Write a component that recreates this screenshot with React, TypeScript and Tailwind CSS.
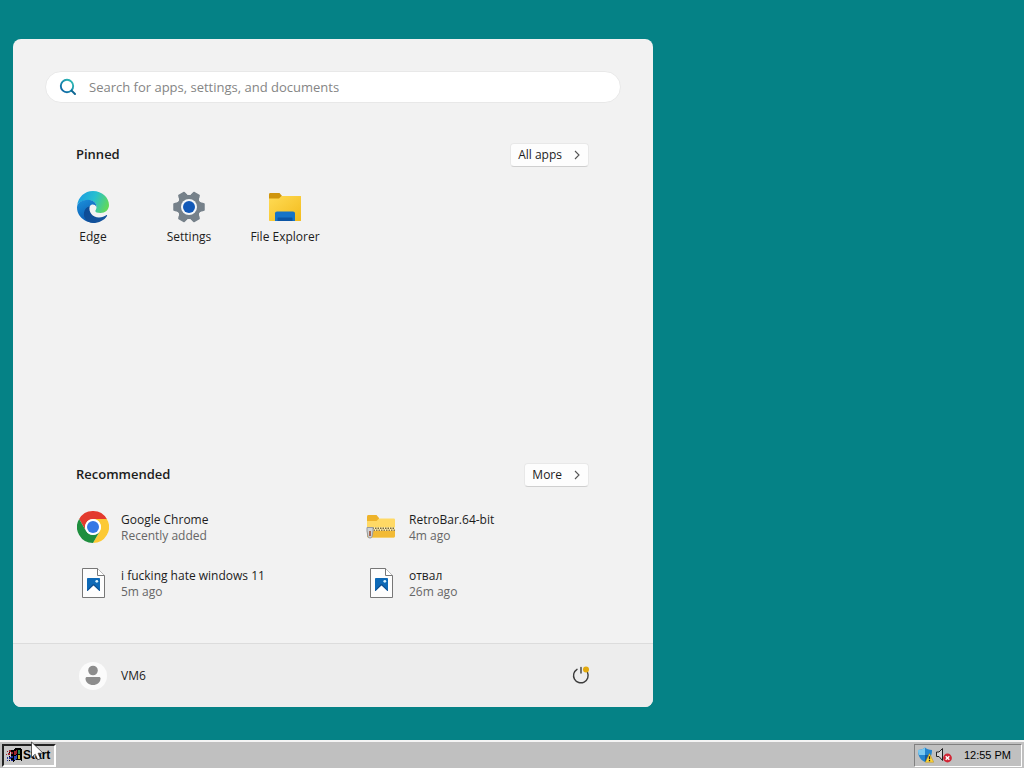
import type { ReactNode } from 'react';

interface PinnedApp {
  name: string;
  icon: ReactNode;
}

interface RecentItem {
  name: string;
  detail: string;
  icon: ReactNode;
}

const EdgeIcon = () => (
  <svg className="size-8" viewBox="0 0 32 32" aria-hidden="true">
    <defs>
      <linearGradient id="edge-top" x1="0" y1="0.3" x2="1" y2="0.6">
        <stop offset="0" stopColor="#1b9de2" />
        <stop offset="0.5" stopColor="#27bfd0" />
        <stop offset="1" stopColor="#62d957" />
      </linearGradient>
      <linearGradient id="edge-left" x1="0" y1="0" x2="0.5" y2="1">
        <stop offset="0" stopColor="#1c92dc" />
        <stop offset="1" stopColor="#0b58b0" />
      </linearGradient>
      <linearGradient id="edge-low" x1="0" y1="0" x2="1" y2="0.6">
        <stop offset="0" stopColor="#0c4a94" />
        <stop offset="1" stopColor="#15549d" />
      </linearGradient>
    </defs>
    <path
      fill="url(#edge-top)"
      d="M0.2 14.2C1.2 6.200 7.600 0 16 0c9 0 16 6.600 16 14 0 5-4 8-8.500 8-3.500 0-5.200-1-5.200-2 0-.8 1.200-1.500 1.200-4 0-4-3.600-7-8.300-7C6 9 1.600 11.500.2 14.200Z"
    />
    <path
      fill="url(#edge-left)"
      d="M0 16.500C0 11.800 5 8.800 11 8.800c4.800 0 8.500 3 8.500 7.200-1.500-3-5-3.300-6.800-.8-3.700 5 .3 13 8.300 13.800C18.500 31.500 12 32 8 29.500 3 26.500 0 22 0 16.500Z"
    />
    <path
      fill="url(#edge-low)"
      d="M12.700 15.200c-1.400 5.800 2.800 11.200 9.300 11.200 3 0 5.500-1 7.200-2.200.6-.4 1.200.1.800.8C27.400 29.300 22 32 16 32 9.500 32 6.200 26.500 7 21.500c.5-3.300 3-5.800 5.700-6.300Z"
    />
  </svg>
);

const SettingsIcon = () => (
  <svg className="size-8" viewBox="0 0 32 32" aria-hidden="true">
    <g fill="#76818a" stroke="#76818a" strokeWidth="1.500" strokeLinejoin="round">
      <circle cx="16" cy="16" r="11.500" />
      {[0, 60, 120, 180, 240, 300].map((angle) => (
        <path
          key={angle}
          d="M25 11l6 2v6l-6 2Z"
          transform={`rotate(${angle} 16 16)`}
        />
      ))}
    </g>
    <g fill="#f2f2f2">
      {[30, 90, 150, 210, 270, 330].map((angle) => (
        <circle
          key={angle}
          cx="30.500"
          cy="16"
          r="2.500"
          transform={`rotate(${angle} 16 16)`}
        />
      ))}
    </g>
    <circle cx="16" cy="16" r="8" fill="#f4f7fa" />
    <circle cx="16" cy="16" r="6" fill="#1259b8" />
  </svg>
);

const FolderIcon = () => (
  <svg className="size-8" viewBox="0 0 32 32" aria-hidden="true">
    <defs>
      <linearGradient id="folder-front" x1="0" y1="0" x2="1" y2="1">
        <stop offset="0" stopColor="#ffdb55" />
        <stop offset="1" stopColor="#f3bb1c" />
      </linearGradient>
    </defs>
    <path fill="#cf950d" d="M0 3.500c0-.8.500-1.500 1.300-1.500h9.200L13 5v4H0Z" />
    <path
      fill="url(#folder-front)"
      d="M0 7.500h10L12.500 5h18.800c.7 0 1 .4 1 1v23c0 .7-.5 1-1 1H1c-.6 0-1-.4-1-1Z"
    />
    <path fill="#1674c8" d="M6 30v-7.500c0-1.200.8-2 2-2h16c1.200 0 2 .8 2 2V30Z" />
    <path fill="#0c55a4" d="M8.500 30v-2.500c0-.6.400-1 1-1h13c.6 0 1 .4 1 1V30Z" />
  </svg>
);

const ChromeIcon = () => (
  <svg className="size-8" viewBox="0 0 32 32" aria-hidden="true">
    <circle cx="16" cy="16" r="16" fill="#fff" />
    <path fill="#e33b2e" d="M2.140 8A16 16 0 0 1 29.860 8H16a8 8 0 0 0-6.930 12Z" />
    <path fill="#fcc934" d="M29.860 8A16 16 0 0 1 16 32l6.930-12A8 8 0 0 0 16 8Z" />
    <path fill="#1e8e3e" d="M16 32A16 16 0 0 1 2.140 8l6.930 12a8 8 0 0 0 13.860 0Z" />
    <circle cx="16" cy="16" r="7.800" fill="#fff" />
    <circle cx="16" cy="16" r="6" fill="#3578e5" />
  </svg>
);

const ZipFolderIcon = () => (
  <svg className="size-8" viewBox="0 0 32 32" aria-hidden="true">
    <path fill="#eeb32a" d="M2 5.500C2 4.600 2.600 4 3.500 4h8L14 7v5H2Z" />
    <path fill="#ffd965" d="M2 10h9.500L14 7.500h14.500c.9 0 1.500.5 1.500 1.300V25c0 .8-.6 1.500-1.500 1.500h-25c-.9 0-1.500-.7-1.500-1.500Z" />
    <path fill="#f2ba35" d="M2 20h28v5c0 .8-.6 1.500-1.500 1.500h-25c-.9 0-1.500-.7-1.500-1.500Z" />
    <path stroke="#fff0b0" strokeWidth="3.500" d="M6 18h24" />
    <path stroke="#77643b" strokeWidth="1.500" strokeDasharray="1.500 1" d="M5 17.200h25" />
    <path stroke="#927a49" strokeWidth="1.500" strokeDasharray="1.500 1" d="M6 19.200h24" />
    <path fill="#cfd2d5" stroke="#969a9e" d="M2 16.500h6v3.500l-1 6c-.3 1.300-3.700 1.300-4 0L2 20Z" />
    <path stroke="#a45b42" strokeWidth="1.800" d="M5 20v5" />
  </svg>
);

const ImageFileIcon = () => (
  <svg className="size-8" viewBox="0 0 32 32" aria-hidden="true">
    <path fill="#fdfdfd" stroke="#777" d="M5.500 1.500h15l7 7v22h-22Z" />
    <path fill="#fff" stroke="#777" d="M20.500 1.500v7h7" />
    <rect x="10" y="11" width="13" height="13" rx="0.800" fill="#0d69b7" />
    <path fill="#fff" d="M10.500 24l6-6.500 6 6.500Z" />
    <path fill="#0d4f91" d="M10 23.200l5.500-5.700c.6-.6 1.400-.6 2 0l5.500 5.700V24l-.8-.2-5.700-5.300-5.700 5.300-.8.200Z" />
    <circle cx="19.800" cy="14.300" r="1.400" fill="#d8f3ff" />
  </svg>
);

const SearchIcon = () => (
  <svg className="size-[18px] shrink-0" viewBox="0 0 18 18" fill="none" aria-hidden="true">
    <defs>
      <linearGradient id="search-stroke" x1="1" y1="0" x2="0" y2="1">
        <stop offset="0" stopColor="#35c4b5" />
        <stop offset="0.600" stopColor="#1786ad" />
        <stop offset="1" stopColor="#0c5aa0" />
      </linearGradient>
    </defs>
    <circle cx="8" cy="8" r="6.200" stroke="url(#search-stroke)" strokeWidth="1.900" />
    <path stroke="#0e6793" strokeWidth="2" strokeLinecap="round" d="M12.600 12.600l3.400 3.400" />
  </svg>
);

const PowerIcon = () => (
  <svg className="size-5" viewBox="0 0 20 20" fill="none" aria-hidden="true">
    <path
      stroke="#3d3d3d"
      strokeWidth="1.400"
      strokeLinecap="round"
      d="M6 3.300a7.300 7.300 0 1 0 10.500 3.200M10 1.500v5.500"
    />
    <circle cx="15" cy="3.500" r="3" fill="#e2a90e" />
  </svg>
);

const WindowsFlag = () => (
  <svg className="h-4 w-[17px] shrink-0" viewBox="0 0 17 16" shapeRendering="crispEdges" aria-hidden="true">
    <path fill="#000" d="M7 3l3-2h3l3 1v12l-3-1h-3l-3 2Z" />
    <path fill="#a0252e" d="M8 4l3-1v4L8 8Z" />
    <path fill="#2d8a55" d="M12 3h2v4h-2Z" />
    <path fill="#2f4fb8" d="M8 9l3-1v4l-3 1Z" />
    <path fill="#c9b52c" d="M12 8h2v4h-2Z" />
    <path fill="#000" d="M5 3h2v2H5zM5 7h2v2H5zM5 11h2v2H5zM3 5h1v1H3zM3 9h1v1H3zM3 13h1v1H3z" />
    <path fill="#a0252e" d="M3 3h2v2H3zM1 4h1v1H1zM5 5h2v2H5zM2 6h2v2H2zM0 7h1v1H0z" />
    <path fill="#26309c" d="M3 10h2v2H3zM5 9h2v2H5zM1 10h1v2H1zM5 13h2v1H5zM1 13h1v1H1z" />
  </svg>
);

const ShieldIcon = () => (
  <svg className="size-4" viewBox="0 0 16 16" aria-hidden="true">
    <path fill="#2385cf" d="M0 3c3 0 5.500-1 7-2.500C8.500 2 11 3 14 3c0 6-2 9.500-7 12C2 12.500 0 9 0 3Z" />
    <path fill="#7bc8ef" d="M0 3c3 0 5.500-1 7-2.500V8H1C.3 6.500 0 5 0 3Z" />
    <path fill="#155a9f" d="M7 8h6c-.9 3-2.700 5.200-6 7Z" />
    <path fill="#ffd83a" stroke="#b88a14" strokeWidth="0.500" d="M11.500 6.500l4.200 8.700H7.300Z" />
    <path stroke="#222" strokeWidth="1.300" d="M11.500 9.200v3M11.500 13v1.300" />
  </svg>
);

const MutedIcon = () => (
  <svg className="size-4" viewBox="0 0 16 16" aria-hidden="true">
    <path fill="#d4d4d4" stroke="#222" d="M0.500 5h2.500L6.500 1.500v12L3 9.500H0.500Z" />
    <circle cx="11.500" cy="11" r="4.400" fill="#d12635" />
    <path stroke="#fff" strokeWidth="1.400" d="M9.700 9.200l3.600 3.600M13.300 9.200l-3.600 3.600" />
  </svg>
);

const Cursor = () => (
  <svg
    className="pointer-events-none absolute -top-px left-[31px] h-5 w-[13px]"
    viewBox="0 0 13 20"
    aria-hidden="true"
  >
    <path fill="#fff" stroke="#222" strokeWidth="0.700" d="M0.500 1v15.500l3.700-3.300 2.500 5.600 2.800-1.200-2.400-5.400h5Z" />
  </svg>
);

const pinnedApps: PinnedApp[] = [
  { name: 'Edge', icon: <EdgeIcon /> },
  { name: 'Settings', icon: <SettingsIcon /> },
  { name: 'File Explorer', icon: <FolderIcon /> },
];

const recentItems: RecentItem[] = [
  { name: 'Google Chrome', detail: 'Recently added', icon: <ChromeIcon /> },
  { name: 'RetroBar.64-bit', detail: '4m ago', icon: <ZipFolderIcon /> },
  { name: 'i fucking hate windows 11', detail: '5m ago', icon: <ImageFileIcon /> },
  { name: 'отвал', detail: '26m ago', icon: <ImageFileIcon /> },
];

const SectionHeader = ({ title, action }: { title: string; action: string }) => (
  <div className="flex h-6 items-start justify-between pl-[31px] pr-8">
    <h2 className="text-[13px] font-semibold leading-[22px]">{title}</h2>
    <button className="flex h-6 items-center gap-3 rounded border border-[#e8e8e8] border-b-[#cfcfcf] bg-[#fdfdfd] pl-[7px] pr-2 text-xs">
      {action}
      <svg className="h-2.5 w-1.5" viewBox="0 0 6 10" fill="none" aria-hidden="true">
        <path stroke="#555" strokeWidth="1.100" d="M1 1l4 4-4 4" />
      </svg>
    </button>
  </div>
);

const StartMenu = () => (
  <section
    aria-label="Start menu"
    className="flex w-full max-w-[640px] flex-col overflow-hidden rounded-lg bg-[#f2f2f2] font-['Open_Sans','Noto_Sans',sans-serif] text-[#1c1c1c]"
  >
    <div className="flex grow flex-col px-8 pt-8">
      <label className="flex h-8 items-center gap-3 rounded-full border border-[#e8e8e8] bg-white px-[13px]">
        <SearchIcon />
        <input
          type="text"
          aria-label="Search"
          placeholder="Search for apps, settings, and documents"
          className="w-full bg-transparent pt-0.5 text-[13px] outline-none placeholder:text-[#858585]"
        />
      </label>

      <div className="mt-10 grow">
        <SectionHeader title="Pinned" action="All apps" />
        <div className="mt-6 grid grid-cols-6">
          {pinnedApps.map((app) => (
            <button key={app.name} className="flex flex-col items-center gap-1.5 text-xs">
              {app.icon}
              <span>{app.name}</span>
            </button>
          ))}
        </div>
      </div>

      <div className="pb-11">
        <SectionHeader title="Recommended" action="More" />
        <div className="mt-6 grid grid-cols-2 gap-y-6">
          {recentItems.map((item) => (
            <button key={item.name} className="flex h-8 items-center gap-3 pl-8 text-left text-xs">
              {item.icon}
              <span className="flex flex-col pt-0.5">
                <span>{item.name}</span>
                <span className="text-[#666]">{item.detail}</span>
              </span>
            </button>
          ))}
        </div>
      </div>
    </div>

    <footer className="flex h-16 items-center justify-between border-t border-[#dcdcdc] bg-[#ededed] pl-[66px] pr-[62px]">
      <button className="flex items-center gap-[14px] text-xs">
        <svg className="size-7" viewBox="0 0 28 28" aria-hidden="true">
          <circle cx="14" cy="14" r="14" fill="#fbfbfb" />
          <circle cx="14" cy="8.500" r="4.800" fill="#8d8d8d" />
          <path fill="#8d8d8d" d="M8 15h12c1 0 1.500.7 1.500 1.500 0 4-3.500 6.500-7.500 6.500s-7.500-2.500-7.500-6.500C6.500 15.700 7 15 8 15Z" />
        </svg>
        VM6
      </button>
      <button aria-label="Power">
        <PowerIcon />
      </button>
    </footer>
  </section>
);

const Taskbar = () => (
  <nav className="relative flex h-7 items-center justify-between border-t-2 border-[#f4f4f4] bg-[#c0c0c0] px-0.5 font-['Liberation_Sans',sans-serif] text-black">
    <button className="flex h-[23px] w-[54px] items-center border-2 border-b-white border-l-[#222] border-r-white border-t-[#222] bg-[#c8c8c8] pl-0.5 text-xs font-bold">
      <WindowsFlag />
      Start
    </button>
    <div className="flex h-[23px] items-center gap-0.5 border border-b-white border-l-[#808080] border-r-white border-t-[#808080] pl-[3px] pr-2.5 text-[11px]">
      <ShieldIcon />
      <MutedIcon />
      <time className="ml-2.5">12:55 PM</time>
    </div>
    <Cursor />
  </nav>
);

const App = () => (
  <div className="flex min-h-screen flex-col bg-[#058286]">
    <main className="flex grow pb-[33px] pl-[13px] pr-3 pt-[39px]">
      <StartMenu />
    </main>
    <Taskbar />
  </div>
);

export default App;
